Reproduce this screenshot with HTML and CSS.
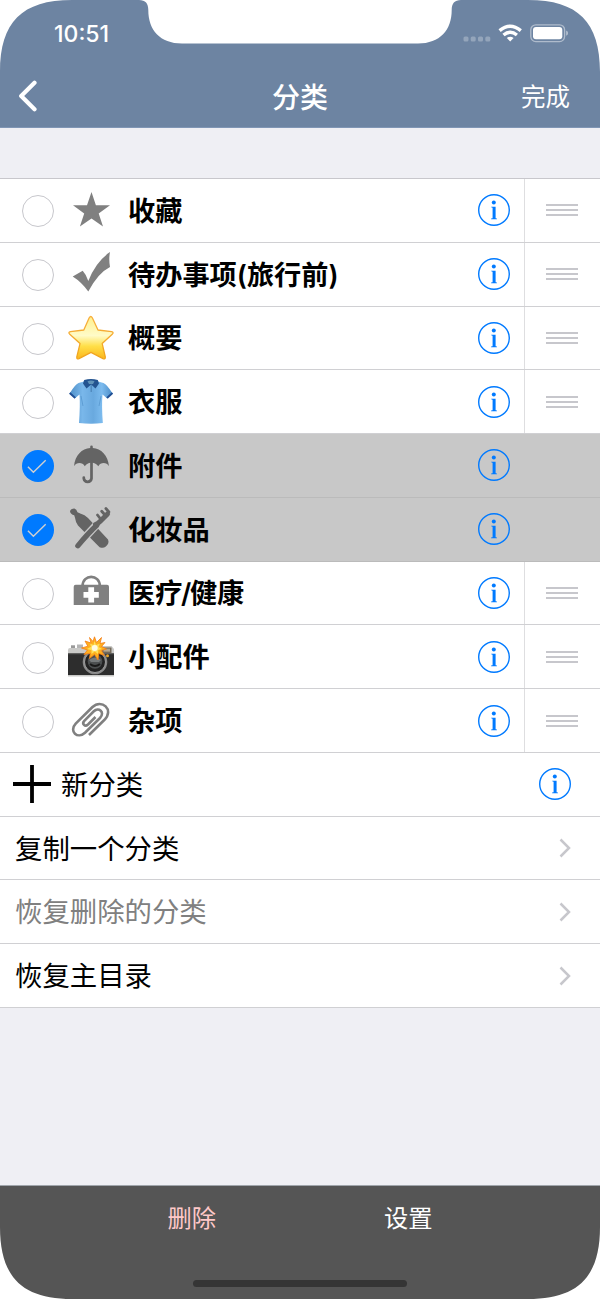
FILE: index.html
```html
<!DOCTYPE html>
<html lang="zh-CN">
<head>
    <meta charset="UTF-8">
    <meta name="viewport" content="width=device-width, initial-scale=1.0">
    <title>分类</title>
    <link rel="stylesheet" href="styles.css">
</head>
<body>

<!-- Shared icons -->
<svg class="defs">
    <symbol id="info" viewBox="0 0 34 34">
        <circle cx="17" cy="17" r="15.3" fill="none" stroke="#007aff" stroke-width="1.4"/>
        <circle cx="16.8" cy="9.4" r="2" fill="#007aff"/>
        <path d="M14.200 13.700h4.400v11.500l1.300.4v.6h-5.800v-.6l1.500-.4v-10.400l-1.400-.5z" fill="#007aff"/>
    </symbol>
    <symbol id="grip" viewBox="0 0 32 14">
        <path d="M0 2h32M0 7h32M0 12h32" stroke="#c7c7cc" stroke-width="1.8"/>
    </symbol>
    <symbol id="chevron" viewBox="0 0 12 20">
        <path d="M1.5 1.5L10 10l-8.500 8.500" fill="none" stroke="#c7c7cc" stroke-width="2.5"/>
    </symbol>
    <symbol id="tick" viewBox="0 0 32 32">
        <path d="M5.900 16.700L11.400 22.300L23.700 10.300" fill="none" stroke="#d0d0d0" stroke-width="1.4"/>
    </symbol>
</svg>

<div class="phone">
    <header>
        <div class="status-bar">
            <span class="time">10:51</span>
            <svg class="status-icons" width="106" height="20" viewBox="0 0 106 20">
                <g fill="#fff" fill-opacity=".27">
                    <rect x="0.500" y="12.500" width="5" height="5" rx="1.5"/>
                    <rect x="7.700" y="12.500" width="5" height="5" rx="1.5"/>
                    <rect x="15" y="12.500" width="5" height="5" rx="1.5"/>
                    <rect x="22.300" y="12.500" width="5" height="5" rx="1.5"/>
                </g>
                <g fill="none" stroke="#fff" stroke-width="3.400">
                    <path d="M36.600 6.600Q47.200 -2.200 57.800 6.600"/>
                    <path d="M40.500 11Q47.200 5.400 53.900 11"/>
                </g>
                <path d="M43.800 14Q47.200 11.400 50.600 14L47.200 17.400z" fill="#fff"/>
                <rect x="67.800" y="0.800" width="33.800" height="16.800" rx="5" fill="none" stroke="#fff" stroke-opacity=".45" stroke-width="1.3"/>
                <rect x="70" y="3" width="29.300" height="12.300" rx="3" fill="#fff"/>
                <path d="M103.200 6.400q1.800.8 1.800 2.700t-1.800 2.700z" fill="#fff" fill-opacity=".5"/>
            </svg>
        </div>
        <div class="nav-bar">
            <svg class="back" width="20" height="32" viewBox="0 0 20 32"><path d="M16.500 2.800L3.200 16l13.300 13.200" fill="none" stroke="#fff" stroke-width="4.200" stroke-linecap="round" stroke-linejoin="round"/></svg>
            <h1>分类</h1>
            <span class="done">完成</span>
        </div>
    </header>

    <main>
        <div class="row">
            <span class="check"></span>
            <svg class="icon" viewBox="0 0 48 48"><path d="M24.500 6L28.900 19.200H43L31.700 27.400 36 40.600 24.500 32.600 12.900 40.600 17.200 27.400 6 19.200H20z" fill="#808080"/></svg>
            <span class="name">收藏</span>
            <svg class="info"><use href="#info"/></svg>
            <span class="handle"><svg><use href="#grip"/></svg></span>
        </div>
        <div class="row">
            <span class="check"></span>
            <svg class="icon" viewBox="0 0 48 48"><path d="M43 2.100Q41.600 9 43 17 31 23 21.300 41.500 14.500 32 5.700 26.500L15.700 20.800Q19.500 25 21.300 31 29 11.500 43 2.100z" fill="#808080"/></svg>
            <span class="name">待办事项(旅行前)</span>
            <svg class="info"><use href="#info"/></svg>
            <span class="handle"><svg><use href="#grip"/></svg></span>
        </div>
        <div class="row">
            <span class="check"></span>
            <svg class="icon" viewBox="0 0 48 48">
                <defs>
                    <linearGradient id="gold" x1="0" y1="0" x2="0" y2="1">
                        <stop offset="0" stop-color="#fff08c"/>
                        <stop offset=".45" stop-color="#fffbc8"/>
                        <stop offset=".7" stop-color="#ffdf48"/>
                        <stop offset="1" stop-color="#fbb61c"/>
                    </linearGradient>
                    <linearGradient id="goldEdge" x1="0" y1="0" x2="0" y2="1">
                        <stop offset="0" stop-color="#f8b040"/>
                        <stop offset="1" stop-color="#f0a41c"/>
                    </linearGradient>
                </defs>
                <path d="M22.200 3.800Q23.800 1.200 25.300 3.800L31 16 44.500 17.600Q47.300 18.300 45.200 20.300L35.200 29.600 38.300 43Q38.400 45.600 36 44.600L24 38.300 12 44.600Q9.600 45.600 9.800 43L13 29.600 2.800 20.300Q.7 18.300 3.500 17.600L16.800 16z" fill="url(#gold)" stroke="url(#goldEdge)" stroke-width="1.300" stroke-linejoin="round"/>
            </svg>
            <span class="name">概要</span>
            <svg class="info"><use href="#info"/></svg>
            <span class="handle"><svg><use href="#grip"/></svg></span>
        </div>
        <div class="row">
            <span class="check"></span>
            <svg class="icon" viewBox="0 0 48 48">
                <defs>
                    <linearGradient id="cloth">
                        <stop offset="0" stop-color="#4e8fc8"/>
                        <stop offset=".3" stop-color="#79b7ea"/>
                        <stop offset=".55" stop-color="#69a9df"/>
                        <stop offset=".75" stop-color="#7cbbee"/>
                        <stop offset="1" stop-color="#4a8bc6"/>
                    </linearGradient>
                </defs>
                <path d="M17 3.500L11.500 5Q8 6.500 2.600 15.500L8 20.300 12.500 16.500Q13.300 28 12 45Q24 46.300 35.800 45 34.500 28 35.500 16.500L40 20.300 45.600 15.500Q40 6.500 36.500 5L31 3.500z" fill="url(#cloth)"/>
                <path d="M2.700 15L8.200 20M45.500 15L40 20" stroke="#204f94" stroke-width="1.900"/>
                <path d="M17.200 2Q24 .2 30.800 2L32 5.500 28.500 10.500 24.200 6.500 19.500 10.500 16 5.500z" fill="#245490"/>
                <path d="M20.500 3.200Q24 2 27.500 3.200L26 6H22z" fill="#6093b8"/>
                <path d="M24.200 7v7" stroke="#4c83b6" stroke-width="1.200"/>
                <path d="M14 18l2 10M34 18l-2 10" stroke="#5797ce" stroke-width=".8"/>
            </svg>
            <span class="name">衣服</span>
            <svg class="info"><use href="#info"/></svg>
            <span class="handle"><svg><use href="#grip"/></svg></span>
        </div>
        <div class="row selected">
            <span class="check"><svg><use href="#tick"/></svg></span>
            <svg class="icon" viewBox="0 0 48 48">
                <path d="M23.200 7V5.700a1.300 1.300 0 0 1 2.600 0V7C34 7.700 41 14 42 25.200 39.600 21 33.600 21 31.300 25.200 29.500 22.600 26.500 21.300 24.500 21.800 22.500 21.300 19.500 22.600 17.800 25.200 15.500 21 9.500 21 7 25.200 8 14 15 7.700 23.200 7z" fill="#646464"/>
                <path d="M24.500 21V37.500a3.900 3.900 0 0 1-7.700 0V36.600" fill="none" stroke="#646464" stroke-width="2.700" stroke-linecap="round"/>
            </svg>
            <span class="name">附件</span>
            <svg class="info"><use href="#info"/></svg>
            <span class="handle"></span>
        </div>
        <div class="row selected">
            <span class="check"><svg><use href="#tick"/></svg></span>
            <svg class="icon" viewBox="0 0 48 48">
                <path d="M3 6.200Q4 3.200 7.400 3.400 9.600 4.200 10.500 7.200L13.200 8.500Q18 9.500 21 13L41 34.500Q42.800 38.500 38.500 41.800 36.300 43.500 32.600 42.200L11 20.500Q8.600 17.500 8 12.800L7.200 10.300Q3.500 9.300 3 6.200z" fill="#646464"/>
                <path d="M10.500 40.500L33.500 15.500" stroke="#c8c8c8" stroke-width="7.800"/>
                <path d="M10.800 40.800Q21 28.500 30 20" fill="none" stroke="#646464" stroke-width="5.200" stroke-linecap="round"/>
                <path d="M28.500 19.500Q31 18.500 33 16.500L40.500 9" fill="none" stroke="#646464" stroke-width="5" stroke-linecap="round"/>
                <path d="M30.500 10l3.500 4.500M34.700 6.300l4 4.500M38.900 3.500l3 3.500" stroke="#646464" stroke-width="2.800" stroke-linecap="round"/>
            </svg>
            <span class="name">化妆品</span>
            <svg class="info"><use href="#info"/></svg>
            <span class="handle"></span>
        </div>
        <div class="row">
            <span class="check"></span>
            <svg class="icon" viewBox="0 0 48 48">
                <path d="M15.600 17C15.600 4.800 32.800 4.800 32.800 17" fill="none" stroke="#808080" stroke-width="2.700"/>
                <path d="M8.700 15.700H40a2 2 0 0 1 2 2V36H6.700V17.700a2 2 0 0 1 2-2z" fill="#808080"/>
                <path d="M24.200 18.300V33.500M16.500 25.800H31.800" stroke="#fff" stroke-width="5.800"/>
            </svg>
            <span class="name">医疗<span class="slash">/</span>健康</span>
            <svg class="info"><use href="#info"/></svg>
            <span class="handle"><svg><use href="#grip"/></svg></span>
        </div>
        <div class="row">
            <span class="check"></span>
            <svg class="icon" viewBox="0 0 48 48">
                <rect x="4" y="12.300" width="4" height="4" fill="#9a9a9a"/>
                <rect x="10" y="11.500" width="6" height="5" fill="#b5b5b5"/>
                <path d="M1 17Q1 15 3 15H19L21 13H44.500L47 16V43.500H1z" fill="#c9c9c7"/>
                <rect x="1" y="20.500" width="46" height="21.500" fill="#2d2d2d"/>
                <path d="M1 21h46" stroke="#444" stroke-width="1"/>
                <rect x="35" y="14.500" width="9.500" height="5.500" fill="#746a5b"/>
                <rect x="36.500" y="15.600" width="6.500" height="3" fill="#b5a78f"/>
                <circle cx="28" cy="29" r="12.300" fill="#888"/>
                <circle cx="28" cy="29" r="10.500" fill="#222" stroke="#a4a4a4" stroke-width=".9"/>
                <circle cx="28" cy="28.500" r="7.300" fill="#4c4f50"/>
                <path d="M22 27Q28 22 34 27L32 29H24z" fill="#767a7b"/>
                <path d="M23 31Q28 35 33 31" fill="none" stroke="#191919" stroke-width="2"/>
                <circle cx="40.500" cy="22.700" r="1.500" fill="#e9a62d"/>
                <path d="M27.500 3.800L29.500 9.500 34.500 4.500 33 10.500 38 9.500 34.500 13.500 39.500 16 34.300 17.500 37.500 22.500 31.800 20.500 31 27 27.500 21.500 22.500 25.500 23.200 20.200 17 21.500 20.500 17 14.500 15 20.800 13.200 18 8 24 10 22.500 4.500 26 8.500z" fill="#ffb01e" stroke="#f47d16" stroke-width=".8"/>
                <path d="M27.500 8L29 12 33 10.500 31.500 14 35 16 31.300 17 31 21 27.800 18.500 24.500 21 24.500 17.300 20 16 24 13.800 23 10.500 26.500 12z" fill="#ffe05a"/>
                <circle cx="27.700" cy="15" r="3" fill="#fffbe2"/>
            </svg>
            <span class="name">小配件</span>
            <svg class="info"><use href="#info"/></svg>
            <span class="handle"><svg><use href="#grip"/></svg></span>
        </div>
        <div class="row">
            <span class="check"></span>
            <svg class="icon" viewBox="0 0 48 48"><path d="M22 38L37.500 22.800C47.500 12.500 34.500 1.500 25.500 10L8.700 26.700C1.500 34.500 10.800 42.500 18 35.800L33 21C38.500 15 31.500 9.800 26.800 14.300L17.300 23.800C14.500 27 18 30.200 21 27.500L28.500 20" fill="none" stroke="#808080" stroke-width="2.600"/></svg>
            <span class="name">杂项</span>
            <svg class="info"><use href="#info"/></svg>
            <span class="handle"><svg><use href="#grip"/></svg></span>
        </div>
        <div class="row add">
            <svg class="plus" width="38" height="38" viewBox="0 0 38 38"><path d="M19 0v38M0 19h38" stroke="#000" stroke-width="3.800"/></svg>
            <span class="label">新分类</span>
            <svg class="info"><use href="#info"/></svg>
        </div>
        <div class="row link">
            <span class="label">复制一个分类</span>
            <svg class="chevron"><use href="#chevron"/></svg>
        </div>
        <div class="row link disabled">
            <span class="label">恢复删除的分类</span>
            <svg class="chevron"><use href="#chevron"/></svg>
        </div>
        <div class="row link">
            <span class="label">恢复主目录</span>
            <svg class="chevron"><use href="#chevron"/></svg>
        </div>
    </main>

    <footer>
        <div class="actions">
            <span class="delete">删除</span>
            <span class="settings">设置</span>
        </div>
        <div class="home-indicator"></div>
    </footer>

    <!-- Rounded screen corners and notch -->
    <svg class="bezel" width="600" height="1299" viewBox="0 0 600 1299">
        <g fill="#fff">
            <path d="M0 0H72C22 0 0 22 0 72z"/>
            <path d="M600 0H528C578 0 600 22 600 72z"/>
            <path d="M0 1299H72C22 1299 0 1277 0 1227z"/>
            <path d="M600 1299H528C578 1299 600 1277 600 1227z"/>
            <path d="M139 0C145.500 0 148.300 3.500 148.300 10C148.300 30 160 43.500 182 43.500H418C440 43.500 451.700 30 451.700 10C451.700 3.500 454.500 0 461 0z"/>
        </g>
    </svg>
</div>

</body>
</html>
```
FILE: styles.css
```css
* {
    margin: 0;
    padding: 0;
    box-sizing: border-box;
}

body {
    background: #fff;
    color: #000;
    font-family: 'Inter', 'Noto Sans CJK SC', sans-serif;
}

svg {
    display: block;
    flex: none;
}

.defs {
    position: absolute;
    width: 0;
    height: 0;
}

.phone {
    position: relative;
    width: 600px;
    height: 1299px;
    background: #efeff4;
    display: flex;
    flex-direction: column;
    overflow: hidden;
}

header {
    height: 127.5px;
    background: #6d84a2;
    color: #fff;
    border-bottom: 1px solid #8096b5;
}

.status-bar {
    height: 67px;
    padding: 1px 31px 0 54px;
    display: flex;
    align-items: center;
    justify-content: space-between;
}

.time {
    font-size: 23px;
    font-weight: 500;
}

.nav-bar {
    height: 57px;
    padding: 0 30px 0 18px;
    display: grid;
    grid-template-columns: 1fr auto 1fr;
    align-items: center;
}

.nav-bar h1 {
    font-size: 28px;
    font-weight: 500;
    padding-right: 12px;
    transform: translateX(12px);
}

.done {
    font-size: 24.5px;
    text-align: right;
}

/* Category list */
main {
    margin-top: 50.5px;
    border-top: 1px solid #c8c7cc;
}

.row {
    height: 63.77px;
    background: #fff;
    border-bottom: 1px solid #d0d0d3;
    display: flex;
    align-items: center;
}

.selected {
    background: #c8c8c8;
    border-bottom-color: #bbb;
}

.check {
    width: 32px;
    height: 32px;
    margin: 2px 13px 0 22px;
    border: 1.5px solid #c7c7cc;
    border-radius: 50%;
}

.selected .check {
    border: none;
    background: #007aff;
}

.check svg {
    width: 32px;
    height: 32px;
}

.icon {
    width: 48px;
    height: 48px;
    margin-right: 13px;
}

.name {
    flex: 1;
    padding-bottom: 3px;
    font-size: 27.2px;
    font-weight: 600;
}

.slash {
    margin: 0 -1.4px;
}

.info {
    width: 34px;
    height: 34px;
    margin-right: 13px;
}

.handle {
    width: 76.5px;
    height: 100%;
    padding-left: 21.5px;
    border-left: 1px solid #dedee0;
    display: flex;
    align-items: center;
}

.selected .handle {
    border-left-color: transparent;
}

.handle svg {
    width: 32px;
    height: 14px;
}

.plus {
    margin: 0 10px 0 13px;
}

.label {
    flex: 1;
    padding-bottom: 3px;
    font-size: 27.4px;
}

.add .info {
    margin-right: 28px;
}

.link {
    padding: 0 29px 0 15px;
}

.disabled {
    color: #808080;
}

.chevron {
    width: 12px;
    height: 20px;
}

/* Bottom toolbar */
footer {
    height: 114px;
    margin-top: auto;
    padding-bottom: 12px;
    background: #555;
    border-top: 1px solid #a0a5ab;
    color: #fff;
    display: flex;
    flex-direction: column;
    align-items: center;
    justify-content: space-between;
}

.actions {
    width: 265px;
    height: 61px;
    display: flex;
    align-items: center;
    justify-content: space-between;
    font-size: 24.3px;
}

.delete {
    color: #ffc8c8;
}

.home-indicator {
    width: 214px;
    height: 7px;
    border-radius: 4px;
    background: #353535;
}

.bezel {
    position: absolute;
    top: 0;
    left: 0;
    pointer-events: none;
}
```
